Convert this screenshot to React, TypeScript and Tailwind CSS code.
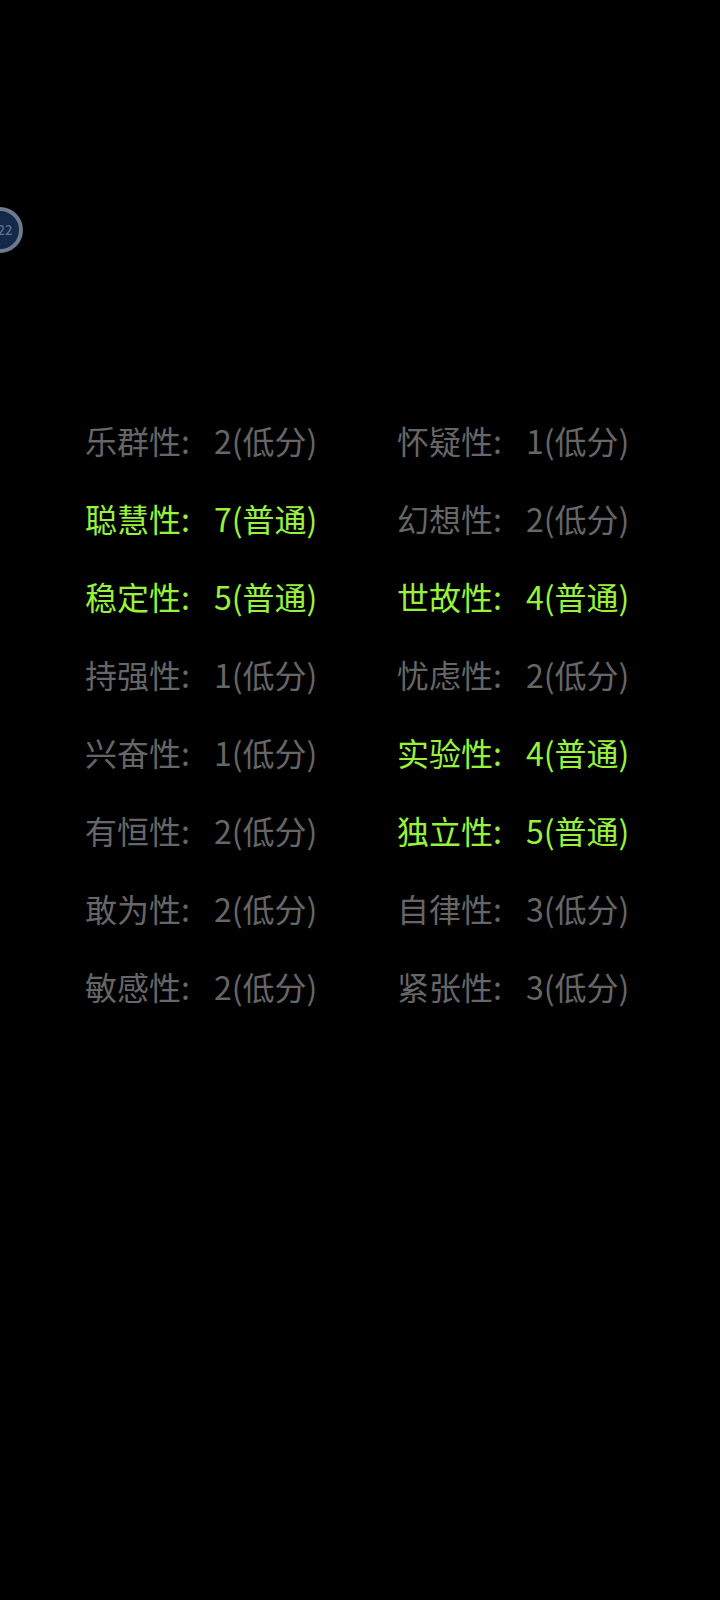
const LEFT = [
  { name: '乐群性', score: 2, level: '低分' },
  { name: '聪慧性', score: 7, level: '普通' },
  { name: '稳定性', score: 5, level: '普通' },
  { name: '持强性', score: 1, level: '低分' },
  { name: '兴奋性', score: 1, level: '低分' },
  { name: '有恒性', score: 2, level: '低分' },
  { name: '敢为性', score: 2, level: '低分' },
  { name: '敏感性', score: 2, level: '低分' },
];

const RIGHT = [
  { name: '怀疑性', score: 1, level: '低分' },
  { name: '幻想性', score: 2, level: '低分' },
  { name: '世故性', score: 4, level: '普通' },
  { name: '忧虑性', score: 2, level: '低分' },
  { name: '实验性', score: 4, level: '普通' },
  { name: '独立性', score: 5, level: '普通' },
  { name: '自律性', score: 3, level: '低分' },
  { name: '紧张性', score: 3, level: '低分' },
];

function Trait({ name, score, level }: { name: string; score: number; level: string }) {
  const normal = level === '普通';
  return (
    <div className={`flex h-[78px] items-center whitespace-nowrap text-[32px] ${normal ? 'text-[#98f23a]' : 'text-[#666666]'}`}>
      <span className="w-[129px]">{name}:</span>
      <span>{score}({level})</span>
    </div>
  );
}

export default function App() {
  return (
    <div className="relative h-[1600px] w-[720px] overflow-hidden bg-black font-['Noto_Sans_CJK_SC','Noto_Sans',sans-serif]">
      {/* floating badge, cut off by the screen edge */}
      <div className="absolute left-[-23px] top-[207px] flex h-[46px] w-[46px] items-center justify-center rounded-full border-[4px] border-[#6c7a8a] bg-[#12294a]">
        <span className="pl-[10px] text-[13px] font-medium text-[#5f6f84]">22</span>
      </div>

      <div className="flex pl-[85px] pt-[401px]">
        <div className="w-[312px]">
          {LEFT.map((t) => (
            <Trait key={t.name} {...t} />
          ))}
        </div>
        <div>
          {RIGHT.map((t) => (
            <Trait key={t.name} {...t} />
          ))}
        </div>
      </div>
    </div>
  );
}
